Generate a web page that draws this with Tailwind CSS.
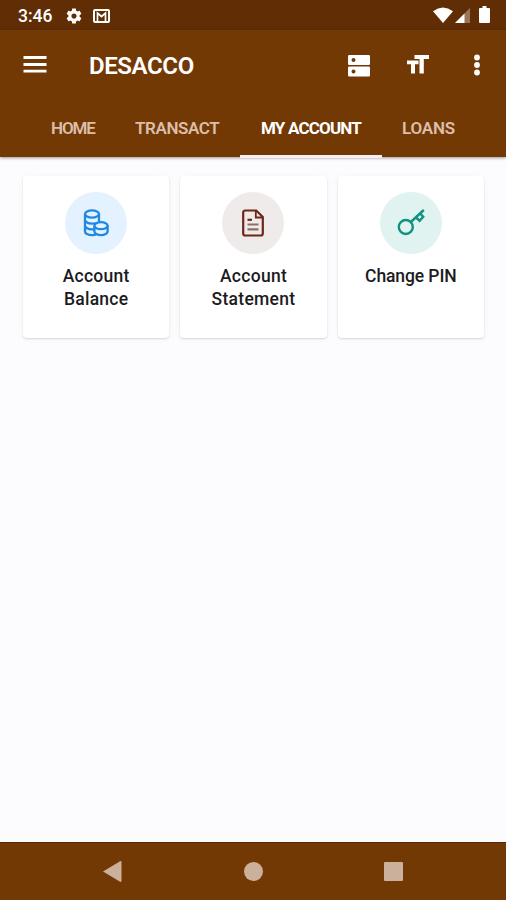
<!DOCTYPE html>
<html lang="en">
<head>
  <meta charset="UTF-8">
  <meta name="viewport" content="width=device-width, initial-scale=1.0">
  <title>DESACCO - My Account</title>
  <script src="https://cdn.jsdelivr.net/npm/@tailwindcss/browser@4"></script>
</head>
<body class="h-screen flex flex-col overflow-hidden bg-[#fcfcfe] font-['Roboto',sans-serif]">

  <!-- Status bar -->
  <div class="h-[30px] shrink-0 flex items-center bg-[#602d04] pl-[18px] pr-[16px] text-white">
    <span class="w-[47px] pt-[3px] text-[17.5px] font-medium leading-none">3:46</span>
    <svg class="w-[18px] h-[18px] mt-px" viewBox="0 0 24 24" fill="currentColor">
      <path d="M19.43 12.98c.04-.32.07-.64.07-.98s-.03-.66-.07-.98l2.11-1.65c.19-.15.24-.42.12-.64l-2-3.46c-.12-.22-.39-.3-.61-.22l-2.49 1c-.52-.4-1.08-.73-1.69-.98l-.38-2.65C14.46 2.18 14.25 2 14 2h-4c-.25 0-.46.18-.49.42l-.38 2.65c-.61.25-1.17.59-1.69.98l-2.49-1c-.23-.09-.49 0-.61.22l-2 3.46c-.13.22-.07.49.12.64l2.11 1.65c-.04.32-.07.65-.07.98s.03.66.07.98l-2.11 1.65c-.19.15-.24.42-.12.64l2 3.46c.12.22.39.3.61.22l2.49-1c.52.4 1.08.73 1.69.98l.38 2.65c.03.24.24.42.49.42h4c.25 0 .46-.18.49-.42l.38-2.65c.61-.25 1.17-.59 1.69-.98l2.49 1c.23.09.49 0 .61-.22l2-3.46c.12-.22.07-.49-.12-.64l-2.11-1.65zM12 15.5c-1.93 0-3.5-1.57-3.5-3.5s1.57-3.5 3.5-3.5 3.5 1.57 3.5 3.5-1.57 3.5-3.5 3.5z"/>
    </svg>
    <svg class="ml-[10px] w-[17px] h-[14px] mt-[1px]" viewBox="0 0 17 14" fill="none" stroke="currentColor">
      <rect x="1" y="1" width="15" height="12" rx="1" stroke-width="2"/>
      <path d="M4.500 12V4l4 3.500 4-3.500V12" stroke-width="1.700"/>
    </svg>
    <svg class="ml-auto w-[20px] h-[16px] mb-px" viewBox="0 0 20 16" fill="currentColor">
      <path d="M0 4.2Q10-3.2 20 4.2L10 16z"/>
    </svg>
    <svg class="ml-[2px] w-[15px] h-[15px] mt-[1px]" viewBox="0 0 15 15" fill="currentColor">
      <path d="M15 0v15H0z" fill-opacity=".35"/>
      <path d="M9.5 5.5V15H0z"/>
    </svg>
    <svg class="ml-[9px] w-[11px] h-[17px] mb-px" viewBox="0 0 11 17" fill="currentColor">
      <path d="M3.5 0h4v2H10a1 1 0 0 1 1 1v13a1 1 0 0 1-1 1H1a1 1 0 0 1-1-1V3a1 1 0 0 1 1-1h2.500z"/>
    </svg>
  </div>

  <!-- App bar -->
  <header class="relative h-[127px] shrink-0 flex flex-col bg-[#733905] text-white shadow-[0_1px_3px_rgba(0,0,0,0.4)]">
    <div class="h-[71px] flex items-center pl-[23px] pr-[26px]">
      <svg class="w-[24px] h-[17px] mb-[2px]" viewBox="0 0 24 17" fill="currentColor">
        <path d="M.5 0h23v2.900H.5zM.5 7h23v2.900H.5zM.5 13.700h23v2.900H.5z"/>
      </svg>
      <h1 class="ml-[42px] pt-px text-[24px] font-semibold leading-none tracking-[-0.4px]">DESACCO</h1>
      <svg class="ml-auto w-[22px] h-[22px]" viewBox="0 0 22 22" fill="currentColor" fill-rule="evenodd">
        <path d="M1.200 0h19.600Q22 0 22 1.200v7.600Q22 10 20.800 10H1.200Q0 10 0 8.800V1.200Q0 0 1.200 0zM5.500 3a2 2 0 1 0 0 4 2 2 0 1 0 0-4z"/>
        <path d="M1.200 11.500h19.600q1.200 0 1.200 1.200v7.600q0 1.200-1.200 1.200H1.200Q0 21.500 0 20.300v-7.600Q0 11.500 1.200 11.500zM5.500 14.500a2 2 0 1 0 0 4 2 2 0 1 0 0-4z"/>
      </svg>
      <svg class="ml-[37px] w-[22px] h-[19px] mb-[2px]" viewBox="0 0 22 19" fill="currentColor">
        <path d="M7.500 0H22v4h-5.200v14.500h-4.300V4h-5z"/>
        <path d="M0 5.500h11.500v3.800H8v9.200H4V9.300H0z"/>
      </svg>
      <svg class="ml-[45px] w-[6px] h-[22px] mb-[2px]" viewBox="0 0 6 22" fill="currentColor">
        <circle cx="3" cy="3.500" r="2.900"/>
        <circle cx="3" cy="11" r="2.900"/>
        <circle cx="3" cy="18.500" r="2.900"/>
      </svg>
    </div>
    <nav class="h-[56px] flex text-[17px] font-semibold leading-[55px] whitespace-nowrap text-[#dcbfa9]">
      <a class="w-[84px] ml-[51px] tracking-[-1.1px]">HOME</a>
      <a class="w-[105px] tracking-[-0.4px]">TRANSACT</a>
      <a class="w-[142px] h-[57px] shrink-0 border-b-3 border-[#f3eef2] text-center font-bold text-white tracking-[-0.8px]">MY ACCOUNT</a>
      <a class="ml-[20px] tracking-[-0.2px]">LOANS</a>
    </nav>
  </header>

  <!-- Account actions -->
  <main class="flex-1 grid grid-cols-3 items-start gap-[11px] pt-[19px] pl-[23px] pr-[22px] text-center text-[17.5px] font-medium leading-[23px] text-[#1c1c1e]">
    <div class="h-[162px] flex flex-col items-center rounded bg-white pt-[16px] shadow-[0_1px_2px_rgba(0,0,0,0.14),0_1px_10px_rgba(0,0,0,0.03)]">
      <div class="size-[62px] flex items-center justify-center rounded-full bg-[#e3f2fe]">
        <svg class="w-[26px] h-[28px]" viewBox="0 0 26 28" fill="none" stroke="#1e88e5" stroke-width="2.300">
          <ellipse cx="9" cy="5" rx="7" ry="3.600"/>
          <path d="M2 5v17.500c0 2 3 3.700 7 3.700 1.500 0 2.800-.2 4-.7M16 5v7.500M2 10.800c0 2 3 3.800 7 3.800 1.500 0 2.700-.2 3.800-.6M2 16.600c0 2 3 3.800 7 3.800 1 0 2-.1 2.800-.3"/>
          <ellipse cx="18" cy="16.700" rx="6.600" ry="3.500"/>
          <path d="M11.400 16.700v5.800c0 2 2.900 3.700 6.600 3.700s6.600-1.700 6.600-3.700v-5.800"/>
        </svg>
      </div>
      <p class="mt-[11px] tracking-[0.25px]">Account<br>Balance</p>
    </div>
    <div class="h-[162px] flex flex-col items-center rounded bg-white pt-[16px] shadow-[0_1px_2px_rgba(0,0,0,0.14),0_1px_10px_rgba(0,0,0,0.03)]">
      <div class="size-[62px] flex items-center justify-center rounded-full bg-[#efebea]">
        <svg class="w-[22px] h-[28px]" viewBox="0 0 22 28" fill="none" stroke="#6d2718" stroke-width="2.200">
          <path d="M3.200 1.500h11L20.800 8v16.500a2 2 0 0 1-2 2H3.200a2 2 0 0 1-2-2v-21a2 2 0 0 1 2-2z"/>
          <path d="M13.800 1.800V8.500h6.700" stroke-width="1.800"/>
          <path d="M5.500 10.800h4.500"/>
          <path d="M5.500 15.500h11M5.500 20.300h11" stroke="#8d6e63"/>
        </svg>
      </div>
      <p class="mt-[11px] tracking-[0.3px]">Account<br>Statement</p>
    </div>
    <div class="h-[162px] flex flex-col items-center rounded bg-white pt-[16px] shadow-[0_1px_2px_rgba(0,0,0,0.14),0_1px_10px_rgba(0,0,0,0.03)]">
      <div class="size-[62px] flex items-center justify-center rounded-full bg-[#e0f3f1]">
        <svg class="w-[28px] h-[28px]" viewBox="0 0 28 28" fill="none" stroke="#12917f" stroke-width="2.400">
          <circle cx="8.800" cy="18" r="7"/>
          <path d="M13.800 13L26.800 1M19 8.500l3.600 3.200 3.600-4-3-3.200"/>
        </svg>
      </div>
      <p class="mt-[11px] tracking-[-0.1px]">Change PIN</p>
    </div>
  </main>

  <!-- System navigation -->
  <footer class="h-[58px] shrink-0 flex items-center border-t border-[#5c2505] bg-[#733905] pl-[103px] text-[#cbb09b]">
    <svg class="w-[19px] h-[21px]" viewBox="0 0 19 21" fill="currentColor">
      <path d="M0 10.500L17.500 0q1 0 1 1v19q0 1-1 1z"/>
    </svg>
    <div class="ml-[122px] size-[19px] rounded-full bg-current"></div>
    <div class="ml-[121px] size-[19px] rounded-[1px] bg-current"></div>
  </footer>

</body>
</html>
